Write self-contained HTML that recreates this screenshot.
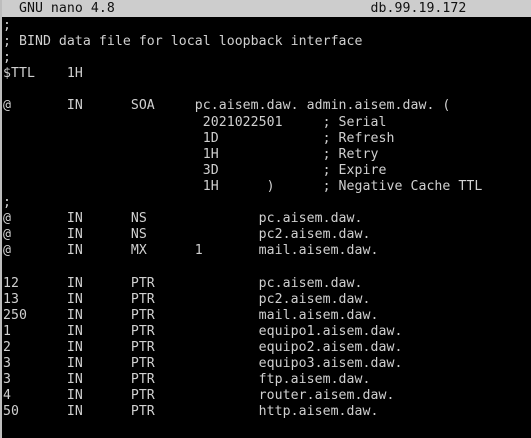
<!DOCTYPE html>
<html><head><meta charset="utf-8"><style>
html,body{margin:0;padding:0;background:#000;width:531px;height:438px;overflow:hidden}
#b{position:absolute;left:0;top:0;width:2px;height:438px;background:#bdbdbd}
#t{position:absolute;left:0;top:0;width:531px;height:17px;background:#cdcdcd}
pre{margin:0;position:absolute;left:3px;font-family:"DejaVu Sans Mono","Liberation Mono",monospace;font-size:13.2px;line-height:16.1px;letter-spacing:0.05px;color:#d0d0d0;white-space:pre}
#tt{top:1px;color:#111}
#c{top:18px}
</style></head><body>
<div id="t"></div><div id="b"></div>
<pre id="tt">  GNU nano 4.8                                db.99.19.172</pre>
<pre id="c">;
; BIND data file for local loopback interface
;
$TTL    1H

@       IN      SOA     pc.aisem.daw. admin.aisem.daw. (
                         2021022501     ; Serial
                         1D             ; Refresh
                         1H             ; Retry
                         3D             ; Expire
                         1H      )      ; Negative Cache TTL
;
@       IN      NS              pc.aisem.daw.
@       IN      NS              pc2.aisem.daw.
@       IN      MX      1       mail.aisem.daw.

12      IN      PTR             pc.aisem.daw.
13      IN      PTR             pc2.aisem.daw.
250     IN      PTR             mail.aisem.daw.
1       IN      PTR             equipo1.aisem.daw.
2       IN      PTR             equipo2.aisem.daw.
3       IN      PTR             equipo3.aisem.daw.
3       IN      PTR             ftp.aisem.daw.
4       IN      PTR             router.aisem.daw.
50      IN      PTR             http.aisem.daw.</pre>
</body></html>
